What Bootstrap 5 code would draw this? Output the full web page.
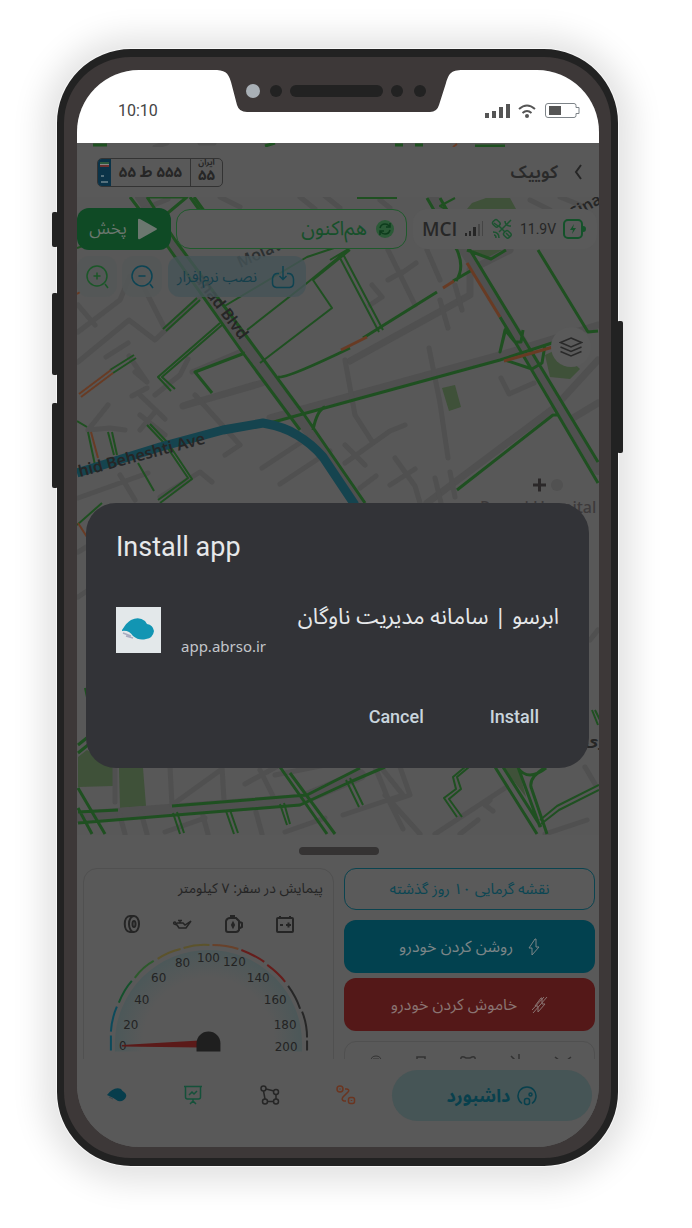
<!DOCTYPE html>
<html lang="fa">
<head>
<meta charset="utf-8">
<meta name="viewport" content="width=device-width, initial-scale=1">
<title>Install app</title>
<link href="https://cdn.jsdelivr.net/npm/bootstrap@5.3.0/dist/css/bootstrap.min.css" rel="stylesheet">
<style>
body{background:#fff;font-family:"Noto Sans Arabic","Vazirmatn","DejaVu Sans",sans-serif;font-size:15px;line-height:20px;color:#252525}
svg{display:block;flex:none}
.phone{margin:49px 74px 62px 57px;border:solid #222;border-width:8px 7px;border-radius:74px;background:#3d3838;padding:13px 12px 11px 13px;box-shadow:0 0 0 1px #f6f6f6,0 2px 32px 14px #e2e2e2}
.side-key{position:absolute;width:6px;background:#222;border-radius:2px}
.key-a{left:-12px;top:155px;height:35px}
.key-b{left:-12px;top:236px;height:82px}
.key-c{left:-12px;top:346px;height:85px}
.key-d{right:-12px;top:264px;height:132px}
.screen{background:#5a5a5a;border-radius:62px;overflow:hidden}
.statusbar{background:#fff;height:73px;padding:8px 18px 0 41px;color:#444;font:400 16px/24px Roboto,sans-serif}
.notch{position:absolute;top:-1px;left:50%;transform:translateX(-50%)}
.map-area{height:692px}
.map-bg{position:absolute;inset:0;width:100%;height:100%}
.topbar{background:#595959;height:50px;margin-top:4px;padding:0 17px 0 20px}
.car-title{font-size:18px;line-height:24px;font-weight:600;color:#2a2a2a}
.plate{height:29px;width:126px;border:1px solid #333;border-radius:5px;overflow:hidden;color:#262626;font-size:15px;font-weight:700}
.plate-flag{width:13px;background:#0b3348;align-self:stretch}
.plate-code{border-left:1px solid #333;width:32px;font-size:15px;line-height:16px}
.plate-top{font-size:8px;line-height:8px}
.tools{gap:5px;margin-top:11px;padding-right:2px}
.btn-play{width:94px;height:42px;border:0;border-radius:12px;background:#0f4a25;color:#6b776f;font-size:17px;padding:0}
.live{height:40px;border:1px solid #1f5a2c;border-radius:14px;background:#5a5a5a;color:#16502a;font-size:20px;padding:0 11px}
.tele{width:184px;height:40px;border-radius:14px;background:#5a5a5a;color:#222;padding:0 11px 0 9px;margin-left:1px}
.mci{font:600 19px/24px "Open Sans",sans-serif;color:#272727}
.volt{font:400 14px/20px Roboto,sans-serif;color:#262626}
.tools2{gap:5px;margin-top:6px}
.btn-zoom{width:40px;height:41px;border:0;border-radius:12px;background:rgba(84,88,88,.8);padding:0}
.btn-inst{width:138px;height:41px;border:0;border-radius:12px;background:rgba(70,84,88,.8);color:#153f4b;font-size:15px;padding:0 11px 0 9px;margin-left:1px}
.btn-layers{position:absolute;right:8px;top:184px;width:40px;height:40px;border:0;border-radius:50%;background:#5a5a5a;padding:0}
.sheet{height:224px;padding:12px 4px 0 6px;overflow:hidden;background:#595959}
.grip{width:80px;height:8px;border-radius:4px;background:#353333}
.panels{gap:10px;margin-top:13px}
.trip{flex:1 1 0;border:1px solid #505050;border-radius:14px;height:220px;padding:10px 10px 0 0;color:#252525;font-size:14px}
.trip-icons{padding:0 28px 0 39px;margin-top:15px}
.dial{margin-top:6px}
.acts{flex:0 0 251px;width:251px}
.act{border:0;border-radius:12px;height:53px;font-size:16px;color:#7b8587;padding:0;gap:15px}
.act-heat{height:42px;border:1px solid #0b4450;color:#0b4653;background:#5a5a5a;font-size:15px}
.act-on{background:#02414f;margin-top:10px}
.act-off{background:#541818;margin-top:5px;color:#8a7472}
.mini{border:1px solid #505050;border-radius:12px;height:40px;margin-top:10px;padding:12px 22px 0 25px}
.tabs{height:88px;padding:11px 7px 0 30px;background:#595959}
.tab-icons{height:50px;padding-right:36px}
.tab-main{width:200px;height:51px;border-radius:26px;background:#465556;color:#08404d;font-size:18px;font-weight:700;gap:7px;text-decoration:none}
.dialog{position:absolute;left:9px;right:10px;top:433px;height:265px;border-radius:30px;background:#323337;color:#e6e8ea;padding:28px 30px 0;font-family:Roboto,sans-serif}
.dialog h1{font:400 27px/32px Roboto,sans-serif;margin:0 0 44px}
.app-logo{width:45px;height:46px;background:#e3e8ea}
.app-name{font:400 22px/20px "Noto Sans Arabic","Vazirmatn","DejaVu Sans",sans-serif;color:#e6e8ea}
.app-host{font:400 15px/22px "Noto Sans",sans-serif;color:#c3c6ca;margin-top:8px}
.dlg-actions{gap:66px;padding-right:20px}
.dlg-btn{font:500 18px/24px Roboto,sans-serif;color:#c9d5dd;background:none;border:0;padding:0}
</style>
</head>
<body>
<main class="phone position-relative">
<span class="side-key key-a"></span><span class="side-key key-b"></span><span class="side-key key-c"></span><span class="side-key key-d"></span>
<div class="screen position-relative">
  <div class="statusbar d-flex align-items-center justify-content-between position-relative">
    <span>10:10</span>
    <svg class="notch" width="250" height="44" viewBox="0 0 250 44"><path fill="#3d3838" d="M0 0H250V1C237 1 236 5 233 14L226 36Q224 43 217 43H34Q26 43 24 36L18 13C15 3 12 1 0 1Z"/><circle cx="40" cy="22" r="7" fill="#a9b0b6"/><circle cx="63" cy="22" r="6" fill="#222"/><rect x="77" y="16" width="93" height="12" rx="6" fill="#222"/><circle cx="184" cy="22" r="6" fill="#222"/><circle cx="207" cy="22" r="6" fill="#222"/></svg>
    <svg width="97" height="18" viewBox="0 0 97 18"><g fill="#555"><path d="M1 11h4v5H1zM8 9h4v7H8zM15 5h4v11h-4zM22 2h4v14h-4z"/><circle cx="43" cy="14" r="2"/><rect x="65" y="4" width="12" height="9"/></g><g fill="none" stroke="#555" stroke-width="2"><path d="M35 7q8-7 16 0M38.500 11q4.500-4 9 0"/></g><path d="M64 1.500h26q2 0 2 2v2h3v6h-3v2q0 2-2 2H64q-2.500 0-2.500-2.500V4q0-2.500 2.500-2.500z" fill="none" stroke="#7d8388"/></svg>
  </div>
  <section class="map-area position-relative overflow-hidden">
    <svg class="map-bg" viewBox="77 143 522 692" preserveAspectRatio="xMidYMid slice" fill="none" stroke-linejoin="round">
      <rect x="77" y="143" width="522" height="692" fill="#585858"/>
      <path fill="#3f5139" d="M462 215l10-12 14-5h24l12 22h-60zM470 250h35l-14 8zM442 388l13-3 6 22-12 4zM545 355l13-6 22 20-10 10-20-2zM78 757l9-7 26 17v19l-35 1zM119 768h24l3 38-26 2zM503 767h15l8 30z"/>
      <g stroke="#505050" stroke-width="5" stroke-linecap="round">
        <path stroke-width="10" d="M140 197L172 243 246 346 298 417 360 503M434 198L464 250 521 340 598 470"/>
        <path stroke-width="7" d="M183 406L262 383M350 361L470 295 470 270 510 250M270 418L500 355 598 325M183 406l15-5M427 503L554 408 598 360M573 418l25-15"/>
        <path stroke-width="12" d="M78 817L300 800 360 775"/>
        <path d="M78 332L120 300 130 276M78 362L129 320 155 340 205 292M136 272l28 55M106 357l22-14M95 325l-17-20M135 372l12 10-18-26M155 395l25-20 8-16M140 395l25 24M147 388l-15 8M88 430l20-25M88 430l22-2 15 2M140 415l25 20M155 412l-15 18M192 372l52-22M195 395l45 50-15 10M262 468l50-33M280 484l50-33M78 498l70-25M120 475l15 25M388 250l27 55M388 280l14-8M402 273l14-10M372 285l10 12-12 8M427 250l13 30M440 300l8 28M455 285l7 25M429 348l11 55 8 55M501 378l8 16 25-11M345 360l10 55 18 28M345 463l45-32 15-6M345 445l20 20M395 458l20 28 5 17M390 485l25-16M435 478l6 25M450 472l5 25M360 488l16-12M160 497l40-25 12 10M78 552l30-18M78 597l30-20M590 640l8-10"/>
        <path d="M170 767l2 38 50-36M222 767l2 33M245 784l40-22M260 770l15 30M275 775l50-10M115 767v35M125 834l-6-22M147 834l-6-22M165 832l40-14M208 834l-6-22M262 834l-6-22M285 832l40-14M343 815l60-20-20-25M400 767l10 28-15 5M385 795l35 39M375 767l14 34 14 28M435 834l70-46M490 800l-5 5 8 6M460 834l18-14M545 834l42-14M585 767l10 17"/>
        <path d="M155 147l12-4M200 143h14M130 215l38-16M220 197l20 10M340 208l-15-12M300 197l15 12M380 200l10 8M530 200l20 10M560 197l20 8"/>
      </g>
      <g stroke="#1f5021" stroke-width="3">
        <path d="M93 145h14M265 146l10-3M395 145h8M415 145h8M475 146h30M130 197L168 247 243 353 300 430M147 197L175 240 247 337 303 413 365 503M147 197l40 0-24 20-8-4M190 197l13 18M194 197l13 18M270 423L350 401 500 360 552 343M278 377q8 2 72-29M363 338L437 292M453 281L472 270M427 198L457 250M500 317L520 350 598 483M440 198L470 250 598 462M457 250q8 18-1 31M467 250l24 9 15-9M506 328l-6 24 5-22 10 12h6l2-12M545 345l-3 18-10 6-27-9M457 490L553 415h6M538 250L588 332l10-1M313 430q4-20 12-23M212 393L195 372 245 353M155 333"/>
        <path stroke-width="2" d="M163 329L197 298M166 331L200 300M220 323L158 377 171 391M222 325L162 377 175 389M110 370l24-15M113 373l23-15M247 330L307 283 350 248M260 363L332 308 313 280 350 250M223 307l84-50 30-10M340 258L379 332M344 256L383 330M350 248l-20 12M88 432l7 33M108 432l6 23M112 432l5 23M147 425l18 19 23 34-30 22M150 424l18 19 24 36-32 24M138 463l16 28M77 421l10 6M77 248l20-7M455 198l-15 8 15 8M357 198l40 0M77 525l25-22M592 710l6 15M595 710l6 12M85 688l3 14"/>
        <path d="M78 812l40-2M78 823L300 805 350 782 385 767M172 806L307 795 360 768M280 767l47 67M290 773l45 61M78 788l27 46M78 808l14 26M78 745l10-8M78 753l10-8M495 767l42 67M503 767l38 60M518 767l22 60M518 768q10 14 28 0M547 834L531 787q-2-10 15-20"/>
        <path stroke-width="2" d="M173 813l7 21M177 812l7 21M226 811l8 23M230 810l8 23M280 804l7 21M284 803l6 21M346 780l13 27M350 778l13 27M465 767l-12 10 3 12-12 9 13 19M469 767l-12 10 4 12-12 10 13 18M540 820l17-14 42-21M541 824l18-14 40-20"/>
      </g>
      <g stroke="#683b24" stroke-width="3"><path d="M341 350l26-13M443 288l11-7M467 263l33 54M504 361l49-14"/><path stroke-width="2" d="M79 394l32-24M81 397l32-24M91 432l7 26M78 523l9 14M77 294l3-2M453 147l4-3"/></g>
      <path stroke="#15444f" stroke-width="9" d="M77 473L160 447 223 430 263 423Q285 427 297 435 312 444 323 457L355 505"/>
      <g font-family="Noto Sans,sans-serif" font-weight="600" font-size="16" fill="#262626">
        <text transform="translate(80 477) rotate(-15)">hid Beheshti Ave</text>
        <text transform="translate(194 279) rotate(53)">ahad Blvd</text>
        <text transform="translate(240 268) rotate(-24)" fill="#2c3031">Molav</text>
        <text transform="translate(574 219) rotate(-30)">Sina</text>
        <text x="480" y="513" fill="#3d3a3b" font-weight="500">Razavi Hospital</text>
        <text x="584" y="746" font-family="DejaVu Sans,sans-serif">وی</text>
      </g>
      <path stroke="#2b2829" stroke-width="3" d="M533 485h13M539.500 478.500v13"/><circle cx="557" cy="485" r="6" fill="#515151"/>
    </svg>
    <div class="topbar d-flex align-items-center justify-content-between position-relative">
      <div class="plate d-flex align-items-center" dir="ltr">
        <span class="plate-flag"><svg width="13" height="28" viewBox="0 0 13 28"><path d="M2 3h9v2H2z" fill="#2b5b3f"/><path d="M2 5h9v1H2z" fill="#888"/><path d="M2 6h9v2H2z" fill="#6b3030"/><path d="M3 17h3M3 23h7" stroke="#55707c" stroke-width="2"/></svg></span>
        <span class="flex-fill text-center" dir="rtl">۵۵۵ ط ۵۵</span>
        <span class="plate-code d-flex flex-column align-items-center align-self-stretch"><span class="plate-top">ایران</span><span>۵۵</span></span>
      </div>
      <div class="d-flex align-items-center gap-3"><span class="car-title">کوییک</span><svg width="8" height="16" viewBox="0 0 8 16" fill="none" stroke="#262626" stroke-width="2"><path d="M7 1L2 8l5 7"/></svg></div>
    </div>
    <div class="tools d-flex align-items-center position-relative">
      <button class="btn-play d-flex align-items-center justify-content-center gap-2"><span>پخش</span><svg width="24" height="24" viewBox="0 0 24 24"><path fill="#6b776f" d="M3 3q0-2 2-1l16 9q2 1 0 2L5 22q-2 1-2-1z"/></svg></button>
      <div class="live flex-fill d-flex align-items-center justify-content-end gap-2"><span>هم‌اکنون</span><svg width="20" height="20" viewBox="0 0 20 20"><circle cx="10" cy="10" r="9" fill="#2b5a37"/><path d="M5 9q1-4 5-4 3 0 4 2m1-3v4h-4M15 11q-1 4-5 4-3 0-4-2m-1 3v-4h4" fill="none" stroke="#0d3c1c" stroke-width="1.500"/></svg></div>
      <div class="tele d-flex align-items-center justify-content-between" dir="ltr"><span class="mci">MCI</span>
        <svg width="20" height="18" viewBox="0 0 20 18"><path fill="#262626" d="M1 13h2v3H1zM5 11h2v5H5zM9 7h3v9H9z"/><path fill="#454545" d="M14 4h2v12h-2zM18 1h1v15h-1z"/></svg>
        <svg width="22" height="22" viewBox="0 0 22 22" fill="none" stroke="#1c5330" stroke-width="1.500"><path d="M8 8l6 6M14 8l-6 6"/><rect x="2" y="2" width="6" height="7" rx="2" transform="rotate(-45 5 5)"/><rect x="13" y="13" width="6" height="7" rx="2" transform="rotate(-45 16 16)"/><path d="M14 8l3-3m-3-2q0 5 6 5M17 5l3-3M2 14q6 0 6 6M3 17q2 0 2 3M3 5l4 3M15 15l4 4"/></svg>
        <span class="volt">11.9V</span>
        <svg width="23" height="20" viewBox="0 0 23 20"><rect x="1" y="1" width="18" height="18" rx="4" fill="none" stroke="#14522a" stroke-width="2"/><path fill="#14522a" d="M20 7q3 0 3 3t-3 3zM11 5l-4 6h3l-1 4 4-6h-3z"/></svg></div>
    </div>
    <div class="tools2 d-flex align-items-center position-relative">
      <button class="btn-zoom d-flex align-items-center justify-content-center" aria-label="+"><svg width="24" height="24" viewBox="0 0 24 24" fill="none" stroke="#1b5728" stroke-width="1.500"><circle cx="12" cy="11" r="10"/><path d="M8.500 11h7M12 7.500v7M20 19l3 4"/></svg></button>
      <button class="btn-zoom d-flex align-items-center justify-content-center" aria-label="−"><svg width="24" height="24" viewBox="0 0 24 24" fill="none" stroke="#0c4454" stroke-width="1.500"><circle cx="12" cy="11" r="10"/><path d="M8.500 11h7M20 19l3 4"/></svg></button>
      <button class="btn-inst d-flex align-items-center justify-content-between"><span class="text-nowrap">نصب نرم‌افزار</span><svg width="24" height="24" viewBox="0 0 24 24" fill="none" stroke="#0f4351" stroke-width="1.500"><path d="M8 8.500H6Q2 9 1.500 14v4q0 4 4 4.500h13q4-.5 4-4.500v-4Q22 9 18 8.500h-2M12 1v13M8.500 11l3.500 3.500 3.500-3.500"/></svg></button>
    </div>
    <button class="btn-layers d-flex align-items-center justify-content-center" aria-label="layers"><svg width="24" height="22" viewBox="0 0 24 22" fill="none" stroke="#292929" stroke-width="1.500"><path d="M12 2l10.500 4.500L12 11 1.500 6.500zM1.500 11L12 15.500 22.500 11M1.500 15.500L12 20l10.500-4.500"/></svg></button>
  </section>
  <section class="sheet">
    <div class="grip mx-auto"></div>
    <div class="panels d-flex align-items-start">
      <div class="trip">
        <div dir="rtl">پیمایش در سفر: ۷ کیلومتر</div>
        <div class="trip-icons d-flex justify-content-between" dir="ltr">
          <svg width="18" height="20" viewBox="0 0 18 20" fill="none" stroke="#252525" stroke-width="2"><ellipse cx="11" cy="10" rx="5" ry="8"/><path d="M11 2H7C0 2 0 18 7 18h4"/><ellipse cx="11" cy="10" rx="1.500" ry="3"/></svg>
          <svg width="20" height="20" viewBox="0 0 20 20" fill="none" stroke="#252525" stroke-width="1.500"><path d="M5 9h6l2 2 6-4-5 7H7L5 11 2 10q-1-2 1-2l2 2M8 9V7M6 6.500h4"/></svg>
          <svg width="20" height="20" viewBox="0 0 20 20" fill="none" stroke="#252525" stroke-width="2"><path d="M6 4h6l3 3v9q-1 2-3 2H4q-2 0-2-2V7q1-3 4-3zM6 2h5M16 8l2 1v4l-2 1"/><path fill="#252525" d="M9 9l1 2-1 2-1-2z"/></svg>
          <svg width="20" height="20" viewBox="0 0 20 20" fill="none" stroke="#252525" stroke-width="2"><rect x="2" y="4" width="16" height="14" rx="1"/><path d="M5 4V2M15 4V2M5 11h3M11 11h5M13.500 8.500v5"/></svg>
        </div>
        <svg class="dial" width="100%" viewBox="84 940 240 113" dir="ltr">
          <defs><radialGradient id="glow" gradientUnits="userSpaceOnUse" cx="209" cy="1044" r="94"><stop offset=".7" stop-color="#4c5859" stop-opacity="0"/><stop offset="1" stop-color="#4c5859"/></radialGradient></defs>
          <path fill="url(#glow)" d="M115 1052v-8a94 94 0 0 1 188 0v8z"/>
          <g fill="none" stroke-width="2">
            <path stroke="#0c4a5b" d="M111 1051V1036M111 1032Q112 1018 117 1007"/><path stroke="#14512c" d="M119 1003Q124 990 132 981"/><path stroke="#2d5a2c" d="M135 978Q143 967 154 961"/><path stroke="#5c532c" d="M158 959Q168 952 181 949M184 948Q197 944 210 945"/><path stroke="#68412a" d="M213 945Q227 945 239 949"/><path stroke="#661d1b" d="M242 950Q255 955 265 962M268 965Q279 973 286 982"/><path stroke="#262626" d="M289 986Q297 997 301 1009M303 1012Q308 1024 308 1038M308 1041V1051"/></g>
          <g font-family="DejaVu Sans,sans-serif" font-size="12" fill="#232323" text-anchor="middle"><text x="123" y="1050">0</text><text x="131" y="1029">20</text><text x="142" y="1004">40</text><text x="159" y="982">60</text><text x="183" y="967">80</text><text x="209" y="962">100</text><text x="235" y="966">120</text><text x="259" y="982">140</text><text x="276" y="1004">160</text><text x="286" y="1029">180</text><text x="287" y="1051">200</text></g>
          <path fill="#5b1a19" d="M122 1045.500L200 1041v7l-78-1z"/><path fill="#1f1f1f" d="M197 1052v-8a12 12 0 0 1 24 0v8z"/>
        </svg>
      </div>
      <div class="acts d-flex flex-column">
        <button class="act act-heat">نقشه گرمایی ۱۰ روز گذشته</button>
        <button class="act act-on d-flex align-items-center justify-content-center"><span>روشن کردن خودرو</span><svg width="12" height="18" viewBox="0 0 12 18" fill="none" stroke="#7b8587"><path d="M7 1L1 10h3v7l7-8H8V1z"/></svg></button>
        <button class="act act-off d-flex align-items-center justify-content-center"><span>خاموش کردن خودرو</span><svg width="16" height="18" viewBox="0 0 16 18" fill="none" stroke="#8a7472"><path d="M9 2L3 10h3v6l7-8h-3V2zM15 1L1 17M12 1L0 14"/></svg></button>
        <div class="mini d-flex justify-content-between"><svg width="12" height="12" viewBox="0 0 12 12" fill="none" stroke="#333"><path d="M1 7q0-5 5-5t5 5zM3 5h6"/></svg><svg width="12" height="12" viewBox="0 0 12 12" fill="none" stroke="#333" stroke-width="1.500"><path d="M2 7V3h8v4"/></svg><svg width="18" height="12" viewBox="0 0 18 12" fill="none" stroke="#333" stroke-width="1.500"><path d="M2 7q-1-5 3-4l2 1h4l2-1q4-1 3 4"/></svg><svg width="12" height="12" viewBox="0 0 12 12" fill="none" stroke="#333" stroke-width="1.500"><path d="M1 2l6 6M9 0v5"/></svg><svg width="18" height="12" viewBox="0 0 18 12" fill="none" stroke="#333" stroke-width="1.500"><path d="M1 3l5 4M17 3l-5 4"/></svg></div>
      </div>
    </div>
  </section>
  <nav class="tabs d-flex align-items-start">
    <div class="tab-icons d-flex flex-fill align-items-center justify-content-between">
      <a href="#" aria-label="home"><svg width="20" height="16" viewBox="0 0 20 16"><path fill="#073d4c" d="M0 8Q7-1 14 2q1 2 3 3 3 2 2 5-2 5-8 4-6-4-11-6z"/><path stroke="#3c474c" d="M2 10l4 2"/></svg></a>
      <a href="#" aria-label="report"><svg width="20" height="20" viewBox="0 0 20 20" fill="none" stroke="#15513a" stroke-width="1.500"><path d="M1 1.500h18M2.500 2v10q0 2 2 2h11q2 0 2-2V2M10 14v2M7 19l3-3 3 3M6 10l3-3 2 2 3-3"/></svg></a>
      <a href="#" aria-label="area"><svg width="20" height="20" viewBox="0 0 20 20" fill="none" stroke="#262626" stroke-width="1.500"><circle cx="3.500" cy="3.500" r="2.500"/><circle cx="16" cy="7" r="2.500"/><circle cx="5" cy="16.500" r="2.500"/><circle cx="16" cy="16.500" r="2.500"/><path d="M6 4l8 2M16 9.500V14M13.500 16.500H7.500M3.500 6L5 14"/></svg></a>
      <a href="#" aria-label="route"><svg width="20" height="20" viewBox="0 0 20 20" fill="none" stroke="#6b3520" stroke-width="1.500"><circle cx="4" cy="4" r="3"/><rect x="12.500" y="12.500" width="6" height="6" rx="2"/><path d="M9 4h2q3 1 1 3l-5 5q-2 3 1 4h2M4 3.500v1M15.500 15v1"/></svg></a>
    </div>
    <a href="#" class="tab-main d-flex align-items-center justify-content-center"><span>داشبورد</span><svg width="20" height="20" viewBox="0 0 20 20" fill="none" stroke="#08404d" stroke-width="1.500"><path d="M5 17.500A9 9 0 1 1 15 17.500"/><rect x="7.500" y="12.500" width="5" height="6" rx="2"/><circle cx="13.500" cy="8.500" r="1.500"/></svg></a>
  </nav>
  <section class="dialog" role="dialog" aria-labelledby="dlgTitle">
    <h1 id="dlgTitle">Install app</h1>
    <div class="d-flex align-items-start">
      <span class="app-logo d-flex align-items-center justify-content-center"><svg width="33" height="26" viewBox="0 0 33 26"><path fill="#1295b3" d="M0 13Q5 5 9 3q8-4 14 1l2 3q6 1 7 7-1 7-8 8-7 2-13-3Q7 13 0 14z"/><path stroke="#a9acc0" stroke-width="1.500" fill="none" d="M1 16l8 3M4 19l7 2"/></svg></span>
      <div class="flex-fill d-flex flex-column ps-3 ms-1"><div class="app-name" dir="rtl">ابرسو | سامانه مدیریت ناوگان</div><div class="app-host">app.abrso.ir</div></div>
    </div>
    <div class="dlg-actions d-flex justify-content-end mt-5"><button class="dlg-btn">Cancel</button><button class="dlg-btn">Install</button></div>
  </section>
</div>
</main>
<script src="https://cdn.jsdelivr.net/npm/bootstrap@5.3.0/dist/js/bootstrap.bundle.min.js"></script>
</body>
</html>
